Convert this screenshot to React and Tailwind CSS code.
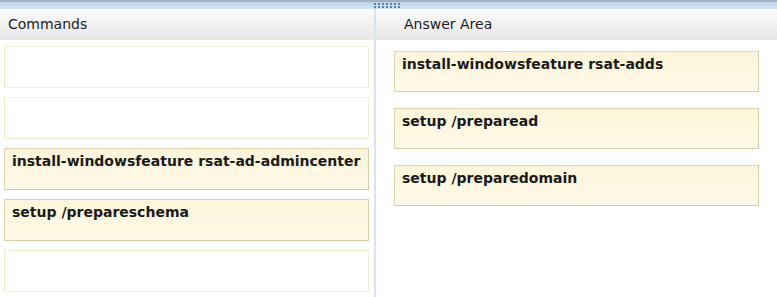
import React from "react";

const font = { fontFamily: '"DejaVu Sans", Verdana, sans-serif' };

function Filled({ text, className = "" }) {
  return (
    <div
      className={
        "h-[41px] border border-[#ddd5ad] border-b-[#d6cea4] border-r-[#d6cea4] bg-gradient-to-b from-[#fdf5da] to-[#fef9e8] px-[7px] pt-[4px] text-[14px] leading-[17px] font-bold text-[#1a1a1a] " +
        className
      }
    >
      {text}
    </div>
  );
}

function Empty() {
  return (
    <div className="h-[42px] border border-[#f3eed6] border-l-[#ece6c8] bg-white" />
  );
}

function Grip() {
  return (
    <svg width="28" height="6" viewBox="0 0 28 6" className="block">
      {Array.from({ length: 7 }).map((_, i) => (
        <g key={i}>
          <rect x={i * 4} y="0" width="2" height="2" fill="#5f7fa8" />
          <rect x={i * 4} y="3" width="2" height="2" fill="#5f7fa8" />
        </g>
      ))}
    </svg>
  );
}

export default function App() {
  return (
    <div className="w-[777px] h-[297px] overflow-hidden bg-white" style={font}>
      <div className="relative h-[9px] border-t-2 border-[#9fb0c0] bg-gradient-to-b from-[#bcd3ea] to-[#d3e3f3]">
        <div className="absolute left-[374px] top-[1px]">
          <Grip />
        </div>
      </div>
      <div className="flex h-[288px]">
        <div className="w-[374px] flex flex-col">
          <div className="h-[31px] flex items-center pl-[8px] bg-gradient-to-b from-[#fbfbfb] to-[#e7e7e7] text-[14px] text-[#222]">
            Commands
          </div>
          <div className="flex flex-col gap-[9px] pl-[4px] pr-[5px] pt-[6px]">
            <Empty />
            <Empty />
            <Filled text="install-windowsfeature rsat-ad-admincenter" className="h-[42px]" />
            <Filled text="setup /prepareschema" className="h-[42px]" />
            <Empty />
          </div>
        </div>
        <div className="w-[2px] bg-[#dbe3ec]" />
        <div className="flex-1 flex flex-col">
          <div className="h-[31px] flex items-center pl-[28px] bg-gradient-to-b from-[#fbfbfb] to-[#e7e7e7] text-[14px] text-[#222]">
            Answer Area
          </div>
          <div className="flex flex-col gap-[16px] pl-[18px] pr-[18px] pt-[11px]">
            <Filled text="install-windowsfeature rsat-adds" />
            <Filled text="setup /preparead" />
            <Filled text="setup /preparedomain" />
          </div>
        </div>
      </div>
    </div>
  );
}
